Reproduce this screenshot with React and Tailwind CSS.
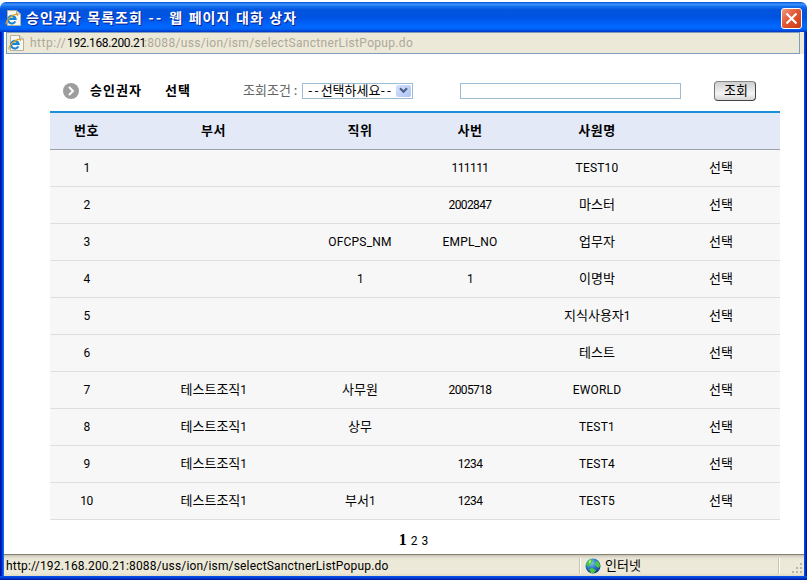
import React from "react";

const rows = [
  ["1", "", "", "111111", "TEST10"],
  ["2", "", "", "2002847", "마스터"],
  ["3", "", "OFCPS_NM", "EMPL_NO", "업무자"],
  ["4", "", "1", "1", "이명박"],
  ["5", "", "", "", "지식사용자1"],
  ["6", "", "", "", "테스트"],
  ["7", "테스트조직1", "사무원", "2005718", "EWORLD"],
  ["8", "테스트조직1", "상무", "", "TEST1"],
  ["9", "테스트조직1", "", "1234", "TEST4"],
  ["10", "테스트조직1", "부서1", "1234", "TEST5"],
];

const columns = "grid grid-cols-[73px_181px_112px_108px_146px_110px] text-center";

// Latin runs are set narrower than the Hangul beside them.
function Mixed({ text }) {
  return text.split(/([A-Za-z0-9_]+)/).map((part, i) =>
    /^[0-9]+$/.test(part) ? (
      <span key={i} className="font-[Roboto] text-[12px] tracking-[-0.6px]">{part}</span>
    ) : /^[A-Z0-9_]+$/.test(part) ? (
      <span key={i} className="font-[Roboto] text-[12px] tracking-[0.2px]">{part}</span>
    ) : (
      part
    )
  );
}

function IePage() {
  return (
    <svg width="16" height="16" viewBox="0 0 16 16" className="shrink-0">
      <path d="M2.5.5h9l4 3.5v11.5h-13z" fill="#f8f8f3" stroke="#b5b19d" />
      <path d="M11.5.5V4h4" fill="#dedbd0" stroke="#aaa797" />
      <path d="M10.3 11.4A3.8 3.8 0 1 1 10.6 8.9H4.2" fill="none" stroke="#1683d8" strokeWidth="2.1" />
      <path d="M1.3 14.4C-.2 12.3 5.8 4.6 11.5 4.3c1.3 0 1.2 1 .8 1.8" fill="none" stroke="#e8a51c" strokeWidth="1.2" />
    </svg>
  );
}

function Globe() {
  return (
    <svg width="16" height="16" viewBox="0 0 16 16" className="shrink-0">
      <defs>
        <radialGradient id="sea" cx=".4" cy=".3" r=".7">
          <stop offset="0" stopColor="#8ec5f5" />
          <stop offset=".5" stopColor="#2c7bd2" />
          <stop offset="1" stopColor="#173f86" />
        </radialGradient>
      </defs>
      <circle cx="8" cy="8" r="7.5" fill="url(#sea)" />
      <path d="M1 6l2-3 3-2 2 1-1 3-2 1v2l-2 1zM10 4l3-1 2 4-1 3-2-1-2-2zM4 11l3-1 4 2-2 3H6z" fill="#4bc83b" />
      <path d="M4 3l2-1v2L4 6z" fill="#b2ef8d" />
    </svg>
  );
}

export default function App() {
  return (
    <div className="flex h-[580px] w-[807px] flex-col overflow-hidden whitespace-nowrap bg-white pt-[2px] font-['Noto_Sans_CJK_KR',sans-serif] text-[13px] leading-none text-black">
      <header className="flex h-[30px] shrink-0 items-center justify-between rounded-t-[6px] bg-[linear-gradient(to_bottom,#0753d6_0%,#3a91fb_8%,#1470ee_15%,#0355df_26%,#0053e1_50%,#005ef5_68%,#0068ff_82%,#0060f2_91%,#0036c8_100%)] pl-[5px] pr-[5px]">
        <div className="flex items-center gap-[5px] pt-[2px]">
          <IePage />
          <h1 className="-mt-[2px] text-[14px] font-bold tracking-[1.05px] text-white [word-spacing:1.3px] [text-shadow:1px_1px_0_#0a1f8f]">
            승인권자 목록조회 <span className="tracking-[2.4px]">--</span> 웹 페이지 대화 상자
          </h1>
        </div>
        <button className="mt-[3px] flex size-[21px] items-center justify-center rounded-[3px] border border-white bg-[linear-gradient(135deg,#f09a80,#e25734_45%,#c93a12)]">
          <svg width="13" height="13" viewBox="0 0 13 13" className="shrink-0">
            <path d="M1.5 1.5l10 10M11.5 1.5l-10 10" stroke="white" strokeWidth="2.2" />
          </svg>
        </button>
      </header>

      <div className="flex min-h-0 flex-1">
        <div className="w-[4px] shrink-0 bg-[linear-gradient(to_right,#0012a8_0_1px,#0023c0_1px_2px,#0046e0_2px_3px,#1268f2_3px)]" />
        <div className="flex min-w-0 flex-1 flex-col">
          <div className="flex h-[22px] shrink-0 bg-[#ece9d8] pr-[4px]">
            <div className="w-[2px] bg-white" />
            <div className="flex flex-1 items-center border border-[#7f9db9] pl-[1px] font-[Roboto] text-[12px] text-[#aca899]">
              <IePage />
              <span className="ml-[6px] w-[37px] tracking-[0.5px]">http://</span>
              <span className="w-[77px] tracking-[-0.35px] text-black">192.168.200.21</span>
              <span className="tracking-[0.32px]">:8088/uss/ion/ism/selectSanctnerListPopup.do</span>
            </div>
          </div>

          <main className="flex-1 pl-[46px] pr-[24px] pt-[20px]">
            <div className="flex h-[37px] items-center pb-px">
              <svg width="16" height="16" viewBox="0 0 16 16" className="-mt-[3px] ml-[13px]">
                <circle cx="8" cy="8" r="8" fill="#9d9d9d" />
                <path d="M6 4l4 4-4 4" fill="none" stroke="white" strokeWidth="2" />
              </svg>
              <h2 className="-mt-[5px] ml-[11px] w-[75px] font-bold tracking-[1px]">승인권자</h2>
              <h2 className="-mt-[6px] w-[78px] font-bold tracking-[1px]">선택</h2>
              <label className="-mt-[5px] w-[59px] text-[#666]">조회조건 :</label>
              <div className="-mt-[3px] flex h-[16px] w-[111px] items-center justify-between border border-[#9bbdd3] pl-[5px] pr-px">
                <span className="-mt-[3px]">
                  <span className="tracking-[1.8px]">--</span>선택하세요<span className="tracking-[1.8px]">--</span>
                </span>
                <span className="flex h-[12px] w-[15px] shrink-0 items-center justify-center rounded-[2px] bg-[linear-gradient(135deg,#d3e0fd,#afc5f5)]">
                  <svg width="9" height="7" viewBox="0 0 9 7">
                    <path d="M1 1.2l3.5 3.5L8 1.2" fill="none" stroke="#4d6185" strokeWidth="2.2" />
                  </svg>
                </span>
              </div>
              <input className="-mt-[3px] ml-[47px] h-[16px] w-[221px] border border-[#9bbdd3] bg-white" />
              <button className="-mt-[3px] ml-[33px] flex h-[20px] w-[42px] items-center justify-center rounded-[4px] border border-[#444] border-l-[#777] border-t-[#888] bg-[linear-gradient(to_bottom,#cfcfcf,#f4f4f4_65%,#d5d5d5)] pb-[3px] pl-[2px]">
                조회
              </button>
            </div>

            <div className={`${columns} h-[39px] items-center border-b border-t-2 border-b-[#9fa1a8] border-t-[#1c8fd8] bg-[#e3e9f7] pb-[3px] font-bold tracking-[0.5px]`}>
              <span>번호</span>
              <span>부서</span>
              <span>직위</span>
              <span>사번</span>
              <span>사원명</span>
              <span />
            </div>
            {rows.map((row) => (
              <div key={row[0]} className={`${columns} h-[37px] items-center border-b border-[#dedede] bg-[#f7f7f7] pb-[3px]`}>
                {row.map((cell, i) => (
                  <span key={i}><Mixed text={cell} /></span>
                ))}
                <span className="pr-[8px]">선택</span>
              </div>
            ))}
            <nav className="flex h-[34px] items-center justify-center gap-[4px] pr-[3px] pt-[7px] font-[Roboto] text-[12px]">
              <b className="pb-px font-['Liberation_Serif'] text-[16px] font-bold">1</b>
              <span>2</span>
              <span>3</span>
            </nav>
          </main>

          <footer className="flex h-[22px] shrink-0 items-center border-t border-[#85816f] bg-[linear-gradient(to_bottom,#c5c2b4_0,#e7e4d5_3px,#ece9d8_6px,#ece9d8_18px,#dedac5_100%)]">
            <span className="w-[575px] pl-[2px] font-[Roboto] text-[12px] tracking-[0.17px]">
              http://192.168.200.21:8088/uss/ion/ism/selectSanctnerListPopup.do
            </span>
            <div className="flex h-[16px] w-[200px] items-center gap-[4px] border-x border-l-[#c9c5b2] border-r-[#c9c5b2] pl-[5px] shadow-[1px_0_0_white,inset_1px_0_0_white]">
              <Globe />
              <span className="-mt-[3px]">인터넷</span>
            </div>
            <svg width="12" height="12" viewBox="0 0 12 12" className="ml-auto mt-[6px]" fill="#b8b4a3">
              <path d="M8 0h2v2H8zM4 4h2v2H4zM8 4h2v2H8zM0 8h2v2H0zM4 8h2v2H4zM8 8h2v2H8z" />
            </svg>
          </footer>
        </div>
        <div className="w-[3px] shrink-0 bg-[linear-gradient(to_right,#0046e0_0_1px,#0030cc_1px_2px,#0012a0_2px)]" />
      </div>
      <div className="h-[4px] shrink-0 bg-[linear-gradient(to_bottom,#0855e8_0,#003bd8_50%,#001590_100%)]" />
    </div>
  );
}
